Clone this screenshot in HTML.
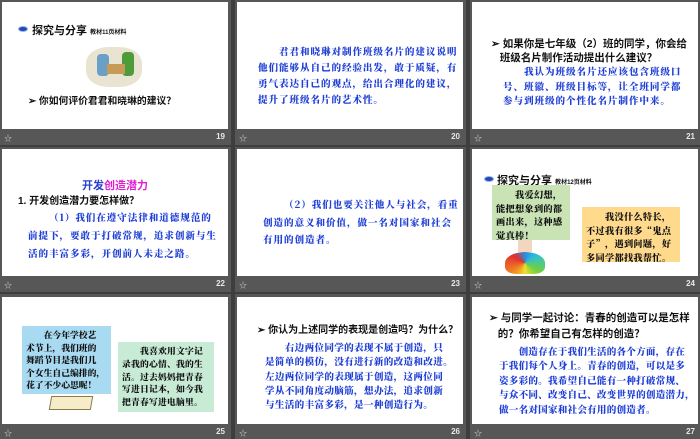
<!DOCTYPE html>
<html><head><meta charset="utf-8"><style>
*{margin:0;padding:0;box-sizing:border-box}
body{width:700px;height:438px;background:#3e3e3e;position:relative;overflow:hidden;font-family:"Liberation Sans","Noto Sans CJK SC",sans-serif}
.tile{position:absolute;background:#575757;width:231px;height:145px}
.s{position:absolute;left:2px;top:2px;width:226px;height:127px;background:#fff;overflow:hidden}
.ft{position:absolute;left:4px;top:133px;color:#cfcfcf;font-size:8px}
.nm{position:absolute;right:6px;top:132px;color:#e8e8e8;font-size:8px;font-weight:bold}
.a{position:absolute;white-space:nowrap}
.bl{color:#1f3fd6;font-family:"Noto Serif CJK SC",serif;font-weight:900;font-size:9.6px;letter-spacing:0.9px}
.bk{color:#111;font-weight:bold;font-family:"Liberation Sans","Noto Sans CJK SC",sans-serif}
.box{position:absolute;white-space:nowrap;font-family:"Noto Serif CJK SC",serif;font-weight:900;color:#111;font-size:9.2px;line-height:13.5px;padding:3px 4px;letter-spacing:0.3px}
.ic{position:absolute;width:10px;height:6px;border-radius:50%;background:#2a4aa8;border:1.5px solid #8fb0ff}
</style></head><body>

<!-- 19 -->
<div class="tile" style="left:0;top:0">
<div class="s">
 <div class="ic" style="left:16px;top:24px"></div>
 <div class="a bk" style="left:30px;top:20px;font-size:11px">探究与分享 <span style="font-size:6px">教材11页材料</span></div>
 <div class="a" style="left:84px;top:45px;width:56px;height:40px;border-radius:40%;background:#e9e4d2"></div>
 <div class="a" style="left:95px;top:52px;width:12px;height:22px;background:#6aa0c8;border-radius:4px"></div>
 <div class="a" style="left:120px;top:50px;width:12px;height:24px;background:#4e9b3a;border-radius:4px"></div>
 <div class="a" style="left:105px;top:62px;width:18px;height:10px;background:#c89a58"></div>
 <div class="a bk" style="left:26px;top:91px;font-size:9.8px">➢ 你如何评价君君和晓琳的建议？</div>
</div>
<div class="ft">☆</div><div class="nm">19</div></div>

<!-- 20 -->
<div class="tile" style="left:235px;top:0">
<div class="s"><div class="a bl" style="left:21px;top:41px;line-height:16px">&emsp;&emsp;君君和晓琳对制作班级名片的建议说明<br>他们能够从自己的经验出发，敢于质疑，有<br>勇气表达自己的观点，给出合理化的建议，<br>提升了班级名片的艺术性。</div></div>
<div class="ft">☆</div><div class="nm">20</div></div>

<!-- 21 -->
<div class="tile" style="left:470px;top:0">
<div class="s">
 <div class="a bk" style="left:19px;top:35px;font-size:10.5px;line-height:14px">➢ 如果你是七年级（2）班的同学，你会给<br>&nbsp;&nbsp;&nbsp;班级名片制作活动提出什么建议？</div>
 <div class="a bl" style="left:31px;top:62px;line-height:14.5px">&emsp;&emsp;我认为班级名片还应该包含班级口<br>号、班徽、班级目标等，让全班同学都<br>参与到班级的个性化名片制作中来。</div>
</div>
<div class="ft">☆</div><div class="nm">21</div></div>

<!-- 22 -->
<div class="tile" style="left:0;top:147px">
<div class="s">
 <div class="a bk" style="left:0;width:226px;text-align:center;top:28px;font-size:11px"><span style="color:#2a3fd0">开发</span><span style="color:#e020d0">创造潜力</span></div>
 <div class="a bk" style="left:16px;top:43px;font-size:10px">1. 开发创造潜力要怎样做？</div>
 <div class="a bl" style="left:26px;top:59px;line-height:18px">&emsp;&emsp;（1）我们在遵守法律和道德规范的<br>前提下，要敢于打破常规，追求创新与生<br>活的丰富多彩，开创前人未走之路。</div>
</div>
<div class="ft">☆</div><div class="nm">22</div></div>

<!-- 23 -->
<div class="tile" style="left:235px;top:147px">
<div class="s"><div class="a bl" style="left:26px;top:47px;line-height:17.5px">&emsp;&emsp;（2）我们也要关注他人与社会，看重<br>创造的意义和价值，做一名对国家和社会<br>有用的创造者。</div></div>
<div class="ft">☆</div><div class="nm">23</div></div>

<!-- 24 -->
<div class="tile" style="left:470px;top:147px">
<div class="s">
 <div class="ic" style="left:12px;top:27px"></div>
 <div class="a bk" style="left:25px;top:23px;font-size:11px">探究与分享 <span style="font-size:6px">教材12页材料</span></div>
 <div class="box" style="left:20px;top:36px;width:78px;height:55px;background:#c9e3b4">&emsp;&emsp;我爱幻想，<br>能把想象到的都<br>画出来，这种感<br>觉真棒！</div>
 <div class="a" style="left:33px;top:103px;width:40px;height:22px;border-radius:50% 50% 30% 30%;background:conic-gradient(#2a8ae0,#30c0d0,#70d040,#f0e030,#f08020,#e03030,#2a8ae0)"></div>
 <div class="a" style="left:46px;top:91px;width:14px;height:12px;background:#f3d6c0"></div>
 <div class="box" style="left:110px;top:58px;width:98px;height:55px;background:#ffd98c">&emsp;&emsp;我没什么特长，<br>不过我有很多“鬼点<br>子”，遇到问题，好<br>多同学都找我帮忙。</div>
</div>
<div class="ft">☆</div><div class="nm">24</div></div>

<!-- 25 -->
<div class="tile" style="left:0;top:294px">
<div class="s" style="top:3px">
 <div class="box" style="left:20px;top:29px;width:89px;height:68px;background:#a8daf2;font-size:8.8px;line-height:12.5px;letter-spacing:0">&emsp;&emsp;在今年学校艺<br>术节上，我们班的<br>舞蹈节目是我们几<br>个女生自己编排的，<br>花了不少心思呢！</div>
 <div class="a" style="left:48px;top:99px;width:42px;height:14px;background:#f6edc8;border:1px solid #8a7a50;transform:skewX(-10deg)"></div>
 <div class="box" style="left:116px;top:45px;width:96px;height:70px;background:#c8ebd6;font-size:8.8px;line-height:12.8px;letter-spacing:0.2px">&emsp;&emsp;我喜欢用文字记<br>录我的心情、我的生<br>活。过去妈妈把青春<br>写进日记本，如今我<br>把青春写进电脑里。</div>
</div>
<div class="ft" style="top:134px">☆</div><div class="nm" style="top:133px">25</div></div>

<!-- 26 -->
<div class="tile" style="left:235px;top:294px">
<div class="s" style="top:3px">
 <div class="a bk" style="left:20px;top:24px;font-size:10px">➢ 你认为上述同学的表现是创造吗？为什么？</div>
 <div class="a bl" style="left:28px;top:43px;line-height:14.3px;letter-spacing:0.3px">&emsp;&emsp;右边两位同学的表现不属于创造，只<br>是简单的模仿，没有进行新的改造和改进。<br>左边两位同学的表现属于创造，这两位同<br>学从不同角度动脑筋，想办法，追求创新<br>与生活的丰富多彩，是一种创造行为。</div>
</div>
<div class="ft" style="top:134px">☆</div><div class="nm" style="top:133px">26</div></div>

<!-- 27 -->
<div class="tile" style="left:470px;top:294px">
<div class="s" style="top:3px">
 <div class="a bk" style="left:17px;top:13px;font-size:10.5px;line-height:16px">➢ 与同学一起讨论：青春的创造可以是怎样<br>&nbsp;&nbsp;&nbsp;的？你希望自己有怎样的创造？</div>
 <div class="a bl" style="left:27px;top:47px;line-height:14.4px;letter-spacing:0.2px">&emsp;&emsp;创造存在于我们生活的各个方面，存在<br>于我们每个人身上。青春的创造，可以是多<br>姿多彩的。我希望自己能有一种打破常规、<br>与众不同、改变自己、改变世界的创造潜力，<br>做一名对国家和社会有用的创造者。</div>
</div>
<div class="ft" style="top:134px">☆</div><div class="nm" style="top:133px">27</div></div>

</body></html>
